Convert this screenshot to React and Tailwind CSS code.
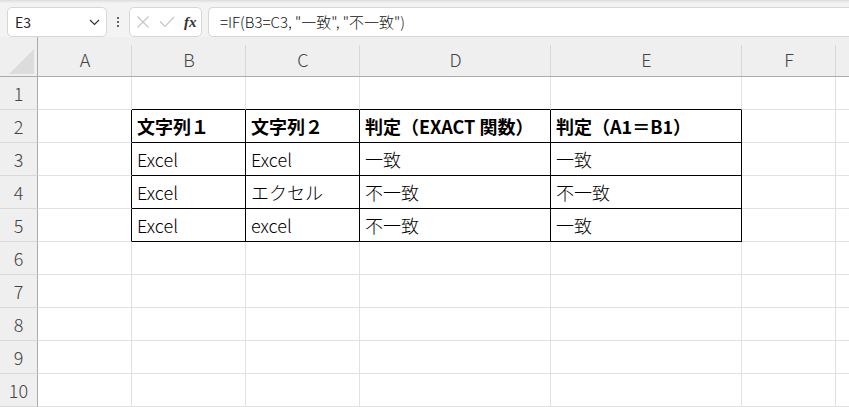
import React from 'react';

const font = { fontFamily: '"Noto Sans CJK JP", "Noto Sans", sans-serif' };

const columns = [
    { label: 'A', width: 'w-[94px]' },
    { label: 'B', width: 'w-[114px]' },
    { label: 'C', width: 'w-[114px]' },
    { label: 'D', width: 'w-[191px]' },
    { label: 'E', width: 'w-[191px]' },
    { label: 'F', width: 'w-[94px]' },
    { label: 'G', width: 'w-[94px]' },
];

// 表の中身 (B2:E5)
const table = {
    2: ['文字列１', '文字列２', '判定（EXACT 関数）', '判定（A1＝B1）'],
    3: ['Excel', 'Excel', '一致', '一致'],
    4: ['Excel', 'エクセル', '不一致', '不一致'],
    5: ['Excel', 'excel', '不一致', '一致'],
};

const rows = [1, 2, 3, 4, 5, 6, 7, 8, 9, 10];

function Toolbar() {
    return (
        <div className="h-[37px] bg-[#f3f3f3] flex items-end relative">
            <div className="absolute top-0 left-0 right-0 h-[3px] bg-gradient-to-b from-[#dcdcdc] to-[#f3f3f3]" />
            <div className="flex items-center w-full h-[30px]">
                <div className="ml-[7px] shrink-0 w-[100px] h-[30px] bg-white border border-[#d6d6d6] rounded-[5px] flex items-center justify-between pl-[7px] pr-[6px]">
                    <span className="text-[14px] text-[#222]">E3</span>
                    <svg width="11" height="7" viewBox="0 0 11 7" fill="none" stroke="#333" strokeWidth="1.2">
                        <path d="M1 1 L5.5 5.5 L10 1" />
                    </svg>
                </div>
                <div className="w-[22px] shrink-0 flex flex-col items-center gap-[2px]">
                    <span className="w-[2px] h-[2px] bg-[#333] rounded-full" />
                    <span className="w-[2px] h-[2px] bg-[#333] rounded-full" />
                    <span className="w-[2px] h-[2px] bg-[#333] rounded-full" />
                </div>
                <div className="w-[73px] shrink-0 h-[30px] bg-white border border-[#d6d6d6] rounded-[5px] flex items-center pl-[6px] gap-[9px]">
                    <svg width="14" height="14" viewBox="0 0 14 14" fill="none" stroke="#c4c4c4" strokeWidth="1.1">
                        <path d="M1.5 1.5 L12.5 12.5 M12.5 1.5 L1.5 12.5" />
                    </svg>
                    <svg width="16" height="12" viewBox="0 0 16 12" fill="none" stroke="#c4c4c4" strokeWidth="1.1">
                        <path d="M1 5.5 L6 10.5 L15 1" />
                    </svg>
                    <span className="text-[15px] italic font-bold text-[#333] leading-none" style={{ fontFamily: '"Liberation Serif", serif' }}>
                        fx
                    </span>
                </div>
                <div className="ml-[6px] flex-1 h-[30px] bg-white border border-[#d6d6d6] border-r-0 rounded-l-[5px] flex items-center pl-[11px]">
                    <span className="text-[15px] font-light text-[#111]">=IF(B3=C3, "一致", "不一致")</span>
                </div>
            </div>
        </div>
    );
}

function ColumnHeader() {
    return (
        <div className="flex h-[40px] bg-[#efefef] border-b border-[#ababab]">
            <div className="w-[38px] shrink-0 border-r border-[#ababab] flex items-end justify-end pr-[3px] pb-[2px]">
                <svg width="25" height="25" viewBox="0 0 25 25">
                    <polygon points="25,0 25,25 0,25" fill="#dcdcdc" />
                </svg>
            </div>
            {columns.map((c) => (
                <div key={c.label} className={`${c.width} shrink-0 relative flex items-center justify-center pt-[6px]`}>
                    <div className="absolute right-0 top-[8px] bottom-0 w-px bg-[#d8d8d8]" />
                    {c.label !== 'G' && <span className="text-[18px] font-light text-[#444]">{c.label}</span>}
                </div>
            ))}
        </div>
    );
}

function Cell({ col, colIdx, row }) {
    const inTableCol = colIdx >= 1 && colIdx <= 4;
    const inTableRow = row >= 2 && row <= 5;
    const rightBlack = inTableRow && colIdx >= 0 && colIdx <= 4;
    const bottomBlack = inTableCol && row >= 1 && row <= 5;
    const value = inTableCol && inTableRow ? table[row][colIdx - 1] : '';
    const bold = row === 2;

    return (
        <div
            className={`${col.width} shrink-0 h-full border-r border-b flex items-center pl-[5px] overflow-hidden whitespace-nowrap ${
                rightBlack ? 'border-r-black' : 'border-r-[#e1e1e1]'
            } ${bottomBlack ? 'border-b-black' : 'border-b-[#e1e1e1]'}`}
        >
            {value && (
                <span className={`text-[18px] text-black ${bold ? 'font-bold' : 'font-light'}`}>{value}</span>
            )}
        </div>
    );
}

export default function App() {
    return (
        <div className="w-[849px] h-[407px] overflow-hidden bg-white" style={font}>
            <Toolbar />
            <ColumnHeader />
            {rows.map((row) => (
                <div key={row} className="flex h-[33px]">
                    <div className="w-[38px] shrink-0 h-full bg-[#efefef] border-r border-r-[#ababab] border-b border-b-[#d8d8d8] flex items-center justify-center">
                        <span className="text-[18px] font-light text-[#444]">{row}</span>
                    </div>
                    {columns.map((c, i) => (
                        <Cell key={c.label} col={c} colIdx={i} row={row} />
                    ))}
                </div>
            ))}
        </div>
    );
}
